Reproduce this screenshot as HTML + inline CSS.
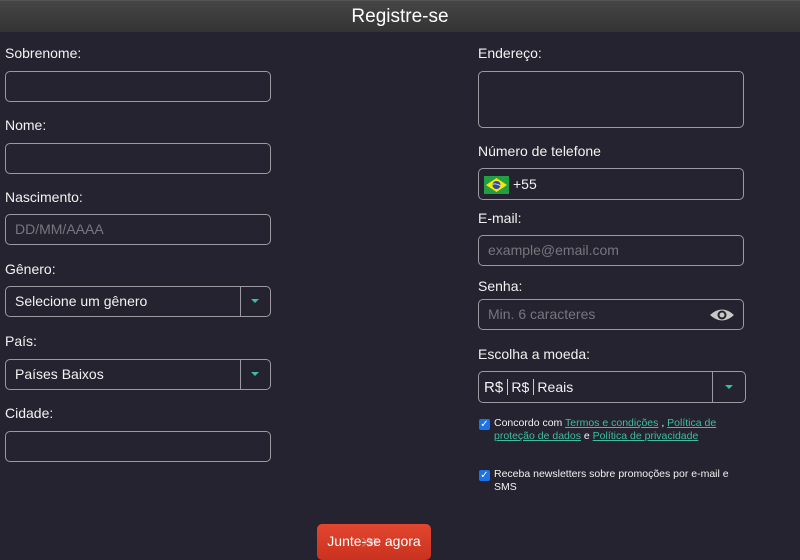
<!DOCTYPE html>
<html><head><meta charset="utf-8"><style>
body{margin:0;width:800px;height:557px;background:#24232f;font-family:"Liberation Sans",sans-serif;color:#f2f2f2;position:relative;overflow:hidden}
.hd{position:absolute;left:0;top:0;width:800px;height:32px;background:linear-gradient(#454545,#343434);border-top:1px solid #555;box-sizing:border-box;text-align:center;font-size:19px;line-height:31px;color:#fff}
.l{position:absolute;font-size:14px}
.i{position:absolute;border:1px solid #9a9aa0;border-radius:5px;box-sizing:border-box;font-size:14px;line-height:29px;padding-left:9px}
.ph{color:#77767f}
.dv{position:absolute;top:0;bottom:0;border-left:1px solid #9a9aa0}
.ar{position:absolute;width:0;height:0;border-left:4px solid transparent;border-right:4px solid transparent;border-top:4px solid #3dbf9f}
.cb{position:absolute;width:11px;height:11px;background:#1a73e8;border-radius:2px;color:#fff;font-size:10px;line-height:11px;text-align:center}
.t{position:absolute;font-size:10.5px;line-height:13px}
a{color:#3dbf9f;text-decoration:underline}
</style></head><body>
<div class="hd">Registre-se</div>
<div class="l" style="left:5px;top:45px">Sobrenome:</div>
<div class="i" style="left:5px;top:71px;width:266px;height:31px"></div>
<div class="l" style="left:5px;top:117px">Nome:</div>
<div class="i" style="left:5px;top:143px;width:266px;height:31px"></div>
<div class="l" style="left:5px;top:189px">Nascimento:</div>
<div class="i ph" style="left:5px;top:214px;width:266px;height:31px">DD/MM/AAAA</div>
<div class="l" style="left:5px;top:261px">Gênero:</div>
<div class="i" style="left:5px;top:286px;width:266px;height:31px">Selecione um gênero<div class="dv" style="left:234px"></div><div class="ar" style="left:245px;top:12px"></div></div>
<div class="l" style="left:5px;top:333px">País:</div>
<div class="i" style="left:5px;top:359px;width:266px;height:31px">Países Baixos<div class="dv" style="left:234px"></div><div class="ar" style="left:245px;top:12px"></div></div>
<div class="l" style="left:5px;top:405px">Cidade:</div>
<div class="i" style="left:5px;top:431px;width:266px;height:31px"></div>

<div class="l" style="left:478px;top:45px">Endereço:</div>
<div class="i" style="left:478px;top:71px;width:266px;height:57px"></div>
<div class="l" style="left:478px;top:143px">Número de telefone</div>
<div class="i" style="left:478px;top:168px;width:266px;height:32px;padding-left:34px;line-height:30px">+55
<svg style="position:absolute;left:5px;top:7px" width="25" height="18" viewBox="0 0 25 18"><rect width="25" height="18" fill="#229e45"/><polygon points="12.5,2 23,9 12.5,16 2,9" fill="#f8e509"/><circle cx="12.5" cy="9" r="4" fill="#2b49a3"/><path d="M8.7 8.2 Q12.5 7.2 16.3 9.6" stroke="#fff" stroke-width="0.8" fill="none"/></svg></div>
<div class="l" style="left:478px;top:210px">E-mail:</div>
<div class="i ph" style="left:478px;top:235px;width:266px;height:31px">example@email.com</div>
<div class="l" style="left:478px;top:278px">Senha:</div>
<div class="i ph" style="left:478px;top:299px;width:266px;height:31px">Min. 6 caracteres
<svg style="position:absolute;left:230px;top:8px" width="26" height="14" viewBox="0 0 26 14"><path d="M1 7 Q13 -4 25 7 Q13 18 1 7Z" fill="#c8c8c8"/><circle cx="13" cy="7" r="4.5" fill="#24232f"/><circle cx="13" cy="7" r="2.5" fill="#c8c8c8"/></svg></div>
<div class="l" style="left:478px;top:346px">Escolha a moeda:</div>
<div class="i" style="left:478px;top:371px;width:268px;height:32px;padding-left:5px;font-size:15px;line-height:30px">R$ <span style="border-left:1px solid #ccc;padding-left:3px;font-size:14px">R$</span> <span style="border-left:1px solid #ccc;padding-left:3px;font-size:14px">Reais</span><div class="dv" style="left:233px"></div><div class="ar" style="left:246px;top:13px"></div></div>

<div class="cb" style="left:479px;top:419px">✓</div>
<div class="t" style="left:494px;top:417px;width:240px">Concordo com <a>Termos e condições</a> , <a>Política de proteção de dados</a> e <a>Política de privacidade</a></div>
<div class="cb" style="left:479px;top:470px">✓</div>
<div class="t" style="left:494px;top:468px;width:250px">Receba newsletters sobre promoções por e-mail e SMS</div>

<div style="position:absolute;left:317px;top:524px;width:114px;height:36px;background:linear-gradient(#e2462f,#c9321f);border-radius:5px;color:#fff;font-size:14px;line-height:34px;text-align:center"><span style="position:absolute;left:44px;top:0;color:rgba(255,255,255,.25);font-size:22px;letter-spacing:-6px">»»</span><span style="position:relative">Junte-se agora</span></div>
</body></html>
